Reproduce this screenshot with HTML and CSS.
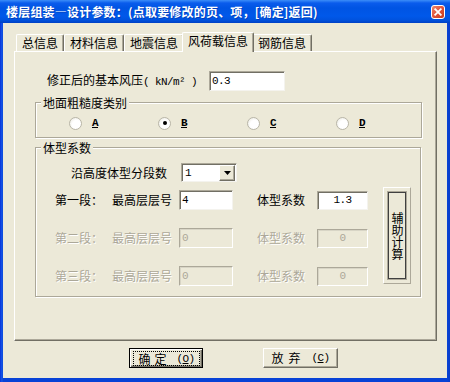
FILE: index.html
```html
<!DOCTYPE html>
<html lang="zh-CN">
<head>
<meta charset="utf-8">
<title>楼层组装</title>
<link rel="stylesheet" href="styles.css">
</head>
<body>
<div class="window">
  <div class="titlebar">
    <span class="title">楼层组装—设计参数：(点取要修改的页、项，[确定]返回)</span>
    <svg class="close" width="14" height="14" viewBox="0 0 14 14">
      <defs>
        <linearGradient id="cg" x1="0" y1="0" x2="1" y2="1">
          <stop offset="0" stop-color="#EE8B6E"/>
          <stop offset="0.5" stop-color="#E0533A"/>
          <stop offset="1" stop-color="#C23A1C"/>
        </linearGradient>
      </defs>
      <rect x="0.5" y="0.5" width="13" height="13" rx="2.5" fill="url(#cg)" stroke="#fff"/>
      <path d="M4.2 4.2L9.8 9.8M9.8 4.2L4.2 9.8" stroke="#fff" stroke-width="1.8" stroke-linecap="square"/>
    </svg>
  </div>
  <div class="client">
    <div class="tabs">
      <div class="tab">总信息</div>
      <div class="tab">材料信息</div>
      <div class="tab">地震信息</div>
      <div class="tab active">风荷载信息</div>
      <div class="tab">钢筋信息</div>
    </div>
    <div class="panel">
      <div class="wind-row">
        <span class="wind-label">修正后的基本风压<span class="mono">( kN/m² )</span></span>
        <span class="field wind-field mono">0.3</span>
      </div>
      <fieldset class="group rough">
        <legend>地面粗糙度类别</legend>
        <div class="radios">
          <label class="radio"><span class="dot"></span><u class="mono">A</u></label>
          <label class="radio"><span class="dot checked"></span><u class="mono">B</u></label>
          <label class="radio"><span class="dot"></span><u class="mono">C</u></label>
          <label class="radio"><span class="dot"></span><u class="mono">D</u></label>
        </div>
      </fieldset>
      <fieldset class="group shape">
        <legend>体型系数</legend>
        <div class="shape-grid">
          <span class="lbl r1 seg-count">沿高度体型分段数</span>
          <span class="select r1">
            <span class="select-val mono">1</span>
            <span class="drop"><svg width="7" height="4" viewBox="0 0 7 4"><path d="M0 0H7L3.5 4Z" fill="#000"/></svg></span>
          </span>

          <span class="lbl r2"><span>第一段：</span><span>最高层层号</span></span>
          <span class="field c1 r2 mono">4</span>
          <span class="lbl2 r2">体型系数</span>
          <span class="field c2 r2 mono center">1.3</span>

          <span class="lbl r3 disabled"><span>第二段：</span><span>最高层层号</span></span>
          <span class="field c1 r3 mono off">0</span>
          <span class="lbl2 r3 disabled">体型系数</span>
          <span class="field c2 r3 mono center off">0</span>

          <span class="lbl r4 disabled"><span>第三段：</span><span>最高层层号</span></span>
          <span class="field c1 r4 mono off">0</span>
          <span class="lbl2 r4 disabled">体型系数</span>
          <span class="field c2 r4 mono center off">0</span>

          <span class="assist"><span class="assist-btn">辅助计算</span></span>
        </div>
      </fieldset>
    </div>
    <div class="buttons">
      <span class="btn default"><span class="focus"><span>确</span><span>定</span><span class="acc mono">(<u>O</u>)</span></span></span>
      <span class="btn"><span class="inner"><span>放</span><span>弃</span><span class="acc mono">(<u>C</u>)</span></span></span>
    </div>
  </div>
</div>
</body>
</html>
```
FILE: styles.css
```css
* { box-sizing: border-box; }
html, body { margin: 0; padding: 0; }
body {
  width: 450px;
  height: 382px;
  overflow: hidden;
  font-family: "Noto Sans CJK SC", "Noto Sans", sans-serif;
  font-size: 12px;
  line-height: 14px;
  color: #000;
  background: #ECE9D8;
}
.mono {
  font-family: "Liberation Mono", monospace;
  font-size: 11px;
  letter-spacing: -0.6px;
}
.window {
  width: 450px;
  height: 382px;
  display: flex;
  flex-direction: column;
  background: linear-gradient(to right, #0831D9 0, #1559E8 2px, #0842D6 3px, #0842D6 447px, #0A3DC8 450px);
}
.titlebar {
  flex: none;
  height: 23px;
  display: flex;
  align-items: center;
  padding: 0 5px 0 6px;
  color: #fff;
  background: linear-gradient(to bottom, #3C8EF8 0, #0A5CEC 3px, #0054E3 8px, #0058EA 16px, #0052DE 20px, #0041C4 23px);
}
.title {
  flex: 1;
  font-weight: 700;
  letter-spacing: 0.2px;
  white-space: nowrap;
  text-shadow: 1px 1px 0 rgba(0, 20, 110, 0.35);
}
.close { flex: none; display: block; }

.client {
  flex: 1;
  margin: 0 3px 4px;
  background: #ECE9D8;
  padding: 10px 10px 0 11px;
  display: flex;
  flex-direction: column;
}
.tabs {
  display: flex;
  align-items: flex-end;
  height: 18px;
  padding-left: 2px;
}
.tab {
  height: 17px;
  padding: 1px 5px 0;
  line-height: 14px;
  white-space: nowrap;
  background: #ECE9D8;
  border-top: 1px solid #fff;
  border-left: 1px solid #fff;
  border-right: 1px solid #716F64;
  box-shadow: inset -1px 0 #ACA899;
  border-radius: 2px 2px 0 0;
}
.tab.active {
  height: 20px;
  margin: 0 -2px -1px;
  position: relative;
  z-index: 1;
}
.panel {
  height: 290px;
  border: 1px solid;
  border-color: #fff #716F64 #716F64 #fff;
  box-shadow: inset -1px -1px #ACA899;
  display: flex;
  flex-direction: column;
}
.wind-row {
  display: flex;
  align-items: center;
  height: 20px;
  margin-top: 19px;
  padding-left: 32px;
}
.wind-label { width: 162px; white-space: nowrap; }
.field {
  height: 20px;
  display: flex;
  align-items: center;
  padding: 0 2px;
  background: #fff;
  border: 1px solid;
  border-color: #ACA899 #F4F3EE #F4F3EE #ACA899;
  box-shadow: inset 1px 1px #716F64;
}
.wind-field { width: 76px; }
.field.center { justify-content: center; }
.field.off { background: #ECE9D8; color: #ACA899; box-shadow: inset 1px 1px #D8D5C6; border-color: #ACA899 #fff #fff #ACA899; }

.group {
  margin: 0;
  padding: 0;
  min-inline-size: 0;
  border: 1px solid #ACA899;
  box-shadow: inset 1px 1px #fff, 1px 1px #fff;
}
.group legend {
  margin-left: 5px;
  padding: 0 2px;
  line-height: 15px;
  background: #ECE9D8;
}
.rough { margin: 4px 14px 0 20px; padding: 6px 0 7px; }
.radios {
  display: grid;
  grid-template-columns: repeat(4, 89px);
  padding-left: 33px;
  height: 14px;
}
.radio { display: flex; align-items: center; gap: 10px; }
.dot {
  width: 13px;
  height: 13px;
  border-radius: 50%;
  border: 1px solid #B9B6A8;
  background: radial-gradient(circle at 60% 60%, #fff 0, #fff 45%, #E6E4DA 100%);
  display: flex;
  align-items: center;
  justify-content: center;
}
.dot.checked::before {
  content: "";
  width: 4px;
  height: 4px;
  border-radius: 50%;
  background: #000;
}
.radio u { font-weight: 700; }

.shape { margin: 2px 15px 0 20px; padding: 8px 0 10px; }
.shape-grid {
  display: grid;
  grid-template-columns: 136px 7px 54px 23px 49px 12px 51px 15px 28px;
  grid-template-rows: 19px 8px 20px 18px 20px 18px 20px;
  align-items: center;
}
.r1 { grid-row: 1; }
.r2 { grid-row: 3; }
.r3 { grid-row: 5; }
.r4 { grid-row: 7; }
.lbl {
  grid-column: 1;
  display: flex;
  justify-content: flex-end;
  gap: 9px;
  white-space: nowrap;
}
.seg-count { padding-right: 5px; }
.lbl2 { grid-column: 5; padding-left: 1px; white-space: nowrap; }
.c1 { grid-column: 3; width: 54px; }
.c2 { grid-column: 7; width: 51px; height: 19px; }
.disabled { color: #ACA899; text-shadow: 1px 1px 0 #fff; }
.select {
  grid-column: 3 / 5;
  margin-left: 2px;
  width: 56px;
  height: 19px;
  display: flex;
  align-items: center;
  background: #fff;
  border: 1px solid;
  border-color: #ACA899 #F4F3EE #F4F3EE #ACA899;
  box-shadow: inset 1px 1px #716F64;
  padding: 1px 1px 1px 3px;
}
.select-val { flex: 1; }
.drop {
  width: 16px;
  height: 16px;
  display: flex;
  align-items: center;
  justify-content: center;
  background: #ECE9D8;
  border: 1px solid;
  border-color: #fff #716F64 #716F64 #fff;
  box-shadow: inset -1px -1px #ACA899;
}
.drop svg { display: block; }
.assist {
  grid-column: 9;
  grid-row: 3 / 8;
  align-self: stretch;
  margin: -3px 0 2px;
  display: flex;
  padding: 3px 3px 3px 3px;
  border: 1px solid;
  border-color: #fff #ACA899 #ACA899 #fff;
}
.assist-btn {
  flex: 1;
  display: flex;
  align-items: center;
  justify-content: center;
  border: 1px solid #ACA899;
  box-shadow: inset 1px 1px #404040, inset -1px -1px #404040;
  writing-mode: vertical-rl;
  text-orientation: upright;
  line-height: 12px;
}

.buttons {
  display: flex;
  gap: 60px;
  margin-top: 7px;
  padding-left: 115px;
}
.btn {
  height: 20px;
  width: 75px;
  display: flex;
  border: 1px solid;
  border-color: #fff #716F64 #716F64 #fff;
  box-shadow: inset -1px -1px #ACA899;
}
.btn.default {
  width: 74px;
  border-color: #000;
  box-shadow: inset 1px 1px #fff, inset -1px -1px #716F64, inset -2px -2px #ACA899;
  padding: 2px 2px 1px 3px;
}
.focus, .inner {
  flex: 1;
  display: flex;
  align-items: center;
  justify-content: center;
  gap: 4px;
}
.focus { border: 1px dotted #000; }
.inner { gap: 5px; }
.acc { margin-left: 6px; }
```
